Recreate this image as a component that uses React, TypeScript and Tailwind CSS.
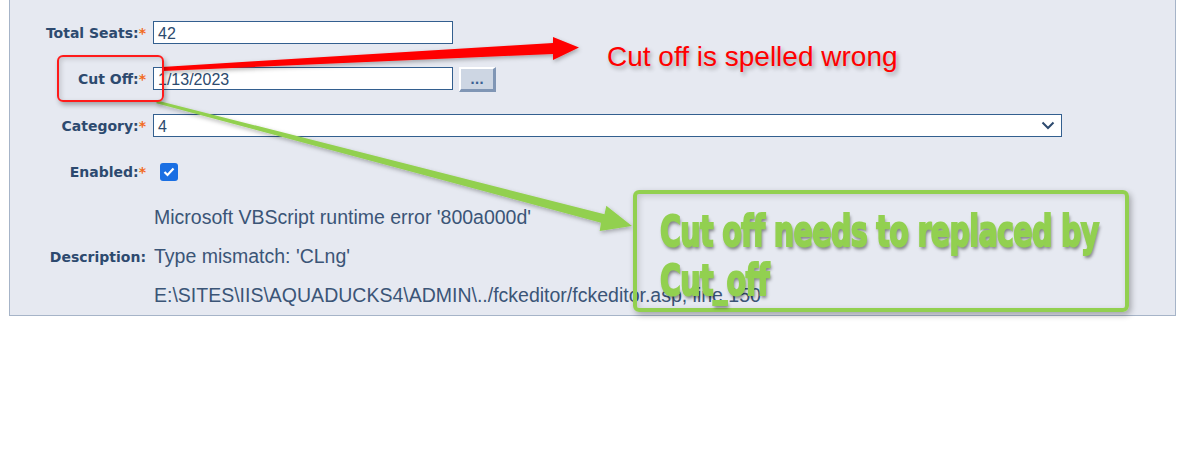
import React from 'react';

const labelCls =
  "w-[136px] shrink-0 text-right text-[14px] font-bold text-[#2d4a6f] font-['DejaVu_Sans',sans-serif] leading-none";

const Req = () => <span className="text-[#f26b21]">*</span>;

const FormRow: React.FC<{ label: string; required?: boolean; children: React.ReactNode; className?: string }> = ({
  label,
  required = true,
  children,
  className = '',
}) => (
  <div className={`flex items-center gap-[7px] ${className}`}>
    <div className={labelCls}>
      {label}
      {required && <Req />}
    </div>
    {children}
  </div>
);

const inputCls =
  "h-[23px] border border-[#335f8f] bg-white px-[4px] pt-[2px] flex items-center text-[16px] leading-none text-[#2c4a6e] font-['Liberation_Sans',Arial,sans-serif]";

const Annotations: React.FC = () => (
  <>
    {/* arrows */}
    <svg className="absolute left-0 top-0 pointer-events-none" width="1181" height="470" viewBox="0 0 1181 470">
      <defs>
        <filter id="sh" x="-10%" y="-50%" width="120%" height="200%">
          <feDropShadow dx="1" dy="2" stdDeviation="2" floodColor="#000" floodOpacity="0.3" />
        </filter>
      </defs>
      <polygon
        filter="url(#sh)"
        fill="#ff0000"
        points="162,67 162,71 553,54 553,60 579,47.5 553,37 553,43"
      />
      <polygon
        filter="url(#sh)"
        fill="#92d050"
        points="157,100.5 156.3,103.2 601,222.7 599.7,231 632,226 606.3,205.8 604.5,214.2"
      />
    </svg>

    {/* red box round label */}
    <div className="absolute left-[57px] top-[55px] w-[107px] h-[47px] rounded-[6px] border-2 border-[#ff1a1a] shadow-[2px_3px_5px_rgba(0,0,0,0.3),inset_2px_2px_5px_rgba(0,0,0,0.15)] pointer-events-none" />

    <div className="absolute left-[607px] top-[38px] text-[28px] leading-[38px] text-[#ff0000] font-['Liberation_Sans',Arial,sans-serif] [text-shadow:2px_3px_4px_rgba(0,0,0,0.3)] whitespace-nowrap">
      Cut off is spelled wrong
    </div>

    {/* green box */}
    <div className="absolute left-[633px] top-[190px] w-[496px] h-[122px] rounded-[6px] border-[4px] border-[#92d050] shadow-[2px_3px_6px_rgba(0,0,0,0.3),inset_2px_2px_6px_rgba(0,0,0,0.15)] pointer-events-none">
      <div className="absolute left-[23px] top-[13px] origin-top-left scale-x-[0.68] whitespace-nowrap text-[42px] leading-[49px] font-bold text-[#92d050] font-['DejaVu_Sans',sans-serif] tracking-[-1px] [-webkit-text-stroke:2px_#92d050] [text-shadow:2px_3px_4px_rgba(0,0,0,0.45)]">
        <div>Cut off needs to replaced by</div>
        <div>Cut_off</div>
      </div>
    </div>
  </>
);

export default function App() {
  return (
    <div className="relative w-[1181px] h-[470px] bg-white overflow-hidden">
      <div className="ml-[9px] w-[1167px] border-x border-b border-[#a6b4c8] bg-[#e6e9f1] pt-[21px] flex flex-col">
        <FormRow label="Total Seats:" className="h-[23px]">
          <div className={`${inputCls} w-[300px]`}>42</div>
        </FormRow>

        <FormRow label="Cut Off:" className="mt-[23px] h-[23px]">
          <div className={`${inputCls} w-[300px]`}>1/13/2023</div>
          <button className="self-start ml-[-1px] w-[37px] h-[25px] bg-[#cdd6e3] border-t-2 border-l-2 border-b-[3px] border-r-[3px] border-t-white border-l-white border-b-[#8096b5] border-r-[#8096b5] flex items-end justify-center pb-[3px] text-[12px] font-bold leading-none text-[#3b5f92] font-['DejaVu_Sans',sans-serif]">
            ...
          </button>
        </FormRow>

        <FormRow label="Category:" className="mt-[24px] h-[23px]">
          <div className={`${inputCls} w-[909px] justify-between pr-[6px]`}>
            <span>4</span>
            <svg width="14" height="9" viewBox="0 0 14 9" fill="none" className="-mt-[2px]">
              <path d="M1.5 1.5 L7 7 L12.5 1.5" stroke="#2d4a6f" strokeWidth="2" />
            </svg>
          </div>
        </FormRow>

        <FormRow label="Enabled:" className="mt-[23px] h-[23px]">
          <div className="h-[23px] flex items-center pl-[7px]">
            <div className="w-[18px] h-[18px] rounded-[3px] bg-[#1a6fe3] flex items-center justify-center">
              <svg width="12" height="10" viewBox="0 0 12 10" fill="none">
                <path d="M1.5 5 L4.5 8 L10.5 1.5" stroke="#fff" strokeWidth="2.2" />
              </svg>
            </div>
          </div>
        </FormRow>

        <FormRow label="Description:" required={false} className="mt-[15px]">
          <div className="flex flex-col text-[19.5px] leading-[39px] text-[#3b5577] font-['Liberation_Sans',Arial,sans-serif] pl-[1px] whitespace-nowrap">
            <div>Microsoft VBScript runtime error '800a000d'</div>
            <div>Type mismatch: 'CLng'</div>
            <div>E:\SITES\IIS\AQUADUCKS4\ADMIN\../fckeditor/fckeditor.asp, line 150</div>
          </div>
        </FormRow>
      </div>

      <Annotations />
    </div>
  );
}
